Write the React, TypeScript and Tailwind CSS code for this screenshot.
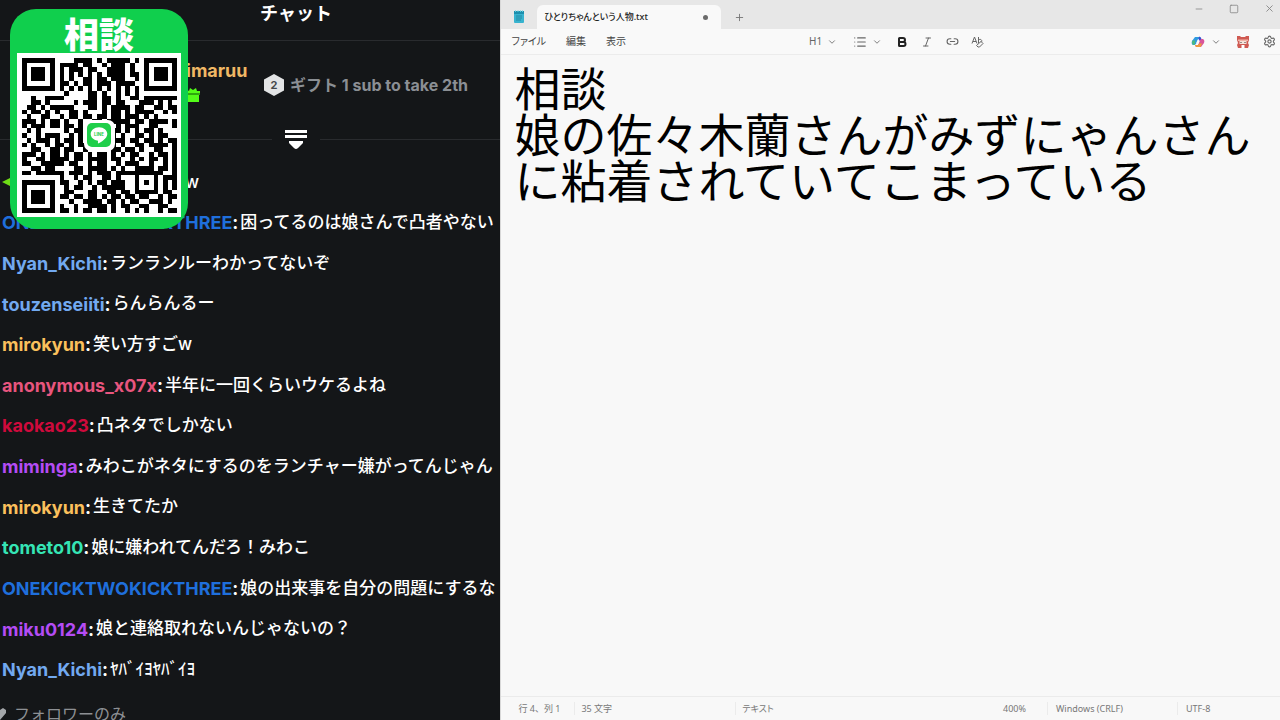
import { Bold, ChevronDown, Italic, Link2, List, Minus, Plus, Settings, Square, X } from 'lucide-react';

interface ChatMessage {
  user: string;
  color: string;
  text: string;
}

const messages: ChatMessage[] = [
  { user: 'ONEKICKTWOKICKTHREE', color: 'text-[#1f6fdc]', text: '困ってるのは娘さんで凸者やない' },
  { user: 'Nyan_Kichi', color: 'text-[#72a9f0]', text: 'ランランルーわかってないぞ' },
  { user: 'touzenseiiti', color: 'text-[#72a9f0]', text: 'らんらんるー' },
  { user: 'mirokyun', color: 'text-[#fbc05c]', text: '笑い方すごw' },
  { user: 'anonymous_x07x', color: 'text-[#e8557e]', text: '半年に一回くらいウケるよね' },
  { user: 'kaokao23', color: 'text-[#cf0a3c]', text: '凸ネタでしかない' },
  { user: 'miminga', color: 'text-[#b44cf5]', text: 'みわこがネタにするのをランチャー嫌がってんじゃん' },
  { user: 'mirokyun', color: 'text-[#fbc05c]', text: '生きてたか' },
  { user: 'tometo10', color: 'text-[#35e5b5]', text: '娘に嫌われてんだろ！みわこ' },
  { user: 'ONEKICKTWOKICKTHREE', color: 'text-[#1f6fdc]', text: '娘の出来事を自分の問題にするな' },
  { user: 'miku0124', color: 'text-[#b44cf5]', text: '娘と連絡取れないんじゃないの？' },
  { user: 'Nyan_Kichi', color: 'text-[#72a9f0]', text: 'ﾔﾊﾞｲﾖﾔﾊﾞｲﾖ' },
];

// One string per row of modules, # is a dark module
const qrRows = [
  '#######....####.#.#####.#.#######',
  '#.....#.####.##..#.###.#..#.....#',
  '#.###.#.#.###.##..####.#..#.###.#',
  '#.###.#.#.#.#.#.#.####.##.#.###.#',
  '#.###.#.#.#..##.##.###..#.#.###.#',
  '#.....#.##.#.##.###.####..#.....#',
  '#######.#.#.#.#.#.#.#.#.#.#######',
  '.........#....##.#..#.#.#........',
  '..#..####.....##.##.#..##.#######',
  '..##.#.....#.###.##.##...###.#.#.',
  '.##.#.#####...##.#.####.##..##.##',
  '#.##.#.#..##.#...#.##.#.####..#.#',
  '.#..##..#.##.##.##.##.###.#.#....',
  '###.#.##.#..#..##.#####.##.####.#',
  '#.###.##.##.#.......#.###..##...#',
  '.#.#.....#.##......##.#.#.##.#...',
  '#..#.###..#.#......#.#..##.#.##..',
  '.#.###.#.##.#......###.##.##.#.##',
  '#.#..#.##.#.##.....#.#..##.####.#',
  '..##..##.##..#.....##.##.#..##..#',
  '###.#.##.#.##.#.##.#.#.##..#.##.#',
  '#..##.####.##.####.##..#.#.##.#.#',
  '##..#####.##..#.##..#.###..#..#.#',
  '..##.##....##.####.#.#..####.##.#',
  '##.######.###.#.###.##########..#',
  '........#..#.##..##.#...#...#.###',
  '#######.##..#.#.##.###..#.#.#.#.#',
  '#.....#..#.##..#.#####..#...#.#.#',
  '#.###.#..##...##..##.##.#####.##.',
  '#.###.#.##.##.##.#.##.##.##..#.##',
  '#.###.#...#..####.##.#.##..###.#.',
  '#.....#.#..#..####.#.##..##..##..',
  '#######.##.#.##.##.#..#.#.#..#.##',
];

const ruleColor = 'bg-[#292b2e]';

function QrCode() {
  return (
    <svg viewBox="0 0 33 33" className="size-[155px]" shapeRendering="crispEdges" role="img" aria-label="QR">
      {qrRows.flatMap((row, y) =>
        row.split('').map((cell, x) =>
          cell === '#' ? <rect key={`${x}-${y}`} x={x} y={y} width="1" height="1" fill="#000" /> : null
        )
      )}
    </svg>
  );
}

/* Green banner that floats over the chat */
function ConsultCard() {
  return (
    <div className="absolute left-[10px] top-[9px] flex h-[220px] w-[178px] flex-col items-center rounded-[26px] bg-[#10cf4d]">
      <h2 className="h-11 font-['Noto_Sans_CJK_JP',sans-serif] text-[35px] font-black leading-[48px] text-white">相談</h2>
      <div className="relative flex size-[164px] items-center justify-center bg-white">
        <QrCode />
        <div className="absolute flex size-[31px] items-center justify-center rounded-[7px] bg-white">
          <svg viewBox="0 0 24 24" className="size-6">
            <rect width="24" height="24" rx="5" fill="#1fcf4a" />
            <path d="M12 4.200c-4.700 0-8.300 3-8.300 6.800 0 3.300 2.800 6 6.600 6.600.9.2.8.6.6 2.400 0 .4.2.6.7.3 2.600-1.300 8.700-4.900 8.700-9.300 0-3.800-3.600-6.800-8.300-6.800z" fill="#fff" />
            <text x="12" y="12.800" fontSize="4.500" fontWeight="700" textAnchor="middle" fill="#1fcf4a">LINE</text>
          </svg>
        </div>
      </div>
    </div>
  );
}

function Chat() {
  return (
    <section className="relative flex w-[39.1%] shrink-0 flex-col overflow-hidden bg-[#141618] font-[Inter,'Noto_Sans_CJK_JP',sans-serif] text-[18px] text-white">
      <div className="flex min-h-0 w-[592px] flex-1 flex-col whitespace-nowrap">
        <h1 className="h-10 text-center text-[18px] font-bold leading-[27px]">チャット</h1>
        <div className={`h-px ${ruleColor}`} />

        {/* Gift leaderboard */}
        <div className="flex h-[87px] items-center pl-[186px]">
          <div className="w-[78px] pb-2">
            <div className="font-bold leading-6 text-[#f0b865]">imaruu</div>
            <svg viewBox="0 0 14 16" className="mt-1 h-4 w-[14px]">
              <path d="M0 2l3 2 1-3 3 2 3-2 1 3h3v3H0z" fill="#53fc18" />
              <path d="M0 6h14v2H0z" fill="#2fa80e" />
              <path d="M0 8h13v7H0z" fill="#53fc18" />
            </svg>
          </div>
          <svg viewBox="0 0 20 22" className="h-[22px] w-5">
            <path d="M10 0l10 5.500v11L10 22 0 16.500v-11z" fill="#e3e4e5" />
            <text x="10" y="15" fontSize="11" fontWeight="700" textAnchor="middle" fill="#45484b">2</text>
          </svg>
          <span className="ml-[6px] text-[16px] font-bold text-[#8b8f94]">ギフト 1 sub to take 2th</span>
        </div>

        <div className="flex h-[22px] items-center justify-center">
          <div className={`h-px flex-1 ${ruleColor}`} />
          <button aria-label="collapse" className="px-[13px]">
            <svg viewBox="0 0 22 20" className="h-5 w-[22px]" fill="#fff">
              <path d="M0 1h22v3H0zM0 6h22v3H0zM4 12h14v2l-5 5q-2 2-4 0l-5-5z" />
            </svg>
          </button>
          <div className={`h-px flex-1 ${ruleColor}`} />
        </div>

        <ul className="mt-3 flex min-h-0 flex-1 flex-col">
          <li className="flex flex-1 items-center">
            <svg viewBox="0 0 12 12" className="ml-[2px] size-3">
              <path d="M0 6l6-3 6-3v12L6 9z" fill="#6fdc16" />
            </svg>
            <span className="pl-[171px] text-[17px] font-medium">w</span>
          </li>
          {messages.map((m, i) => (
            <li key={i} className="flex flex-1 items-center pl-[2px]">
              <span className={`font-bold ${m.color}`}>{m.user}</span>
              <span className="font-bold">:</span>
              <span className="ml-0.5 text-[17px] font-medium">{m.text}</span>
            </li>
          ))}
        </ul>

        <div className="flex h-[30px] shrink-0 items-start gap-2 text-[16px] text-[#8d9094]">
          <svg viewBox="0 0 12 12" className="-ml-[6px] mt-[18px] size-3" fill="#a4a7aa">
            <path d="M6 12L0 5V2l3-2 3 2 3-2 3 2v3z" />
          </svg>
          <span className="mt-3 leading-6">フォロワーのみ</span>
        </div>
      </div>
      <ConsultCard />
    </section>
  );
}

function TitleBar() {
  return (
    <div className="flex h-[29px] items-end bg-[#e7e7e7]">
      <div className="flex h-[25px] w-9 items-center justify-center">
        <svg viewBox="0 0 12 14" className="h-[14px] w-3">
          <rect x="1" y="1" width="10" height="12" rx="1" fill="#37b3cf" />
          <path d="M1 1h10v3H1z" fill="#1c8fae" />
          <path d="M3 6h6M3 8h6M3 10h5" stroke="#1e7d98" strokeWidth="0.8" />
          <path d="M2.500 0v2M5 0v2M7.500 0v2M9.500 0v2" stroke="#7adbe8" strokeWidth="0.8" />
        </svg>
      </div>
      <div className="flex h-6 w-[184px] items-center justify-between rounded-t-md bg-[#f9f9f9] pl-[7px] pr-[13px] text-[9px] font-medium text-[#222]">
        <span className="[font-feature-settings:'palt']">ひとりちゃんという人物.txt</span>
        <span className="size-[5px] rounded-full bg-[#6b6b6b]" />
      </div>
      <button aria-label="new tab" className="flex h-6 w-9 items-center justify-center text-[#777]">
        <Plus size={11} strokeWidth={2} />
      </button>
      <div className="ml-auto flex items-center gap-[25px] self-start pr-[5px] pt-[3px] text-[#888]">
        <button aria-label="minimize"><Minus size={10} /></button>
        <button aria-label="maximize"><Square size={10} /></button>
        <button aria-label="close"><X size={11} /></button>
      </div>
    </div>
  );
}

function MenuBar() {
  return (
    <div className="flex h-[26px] items-center border-b border-[#ececec] bg-[#f9f9f9] text-[10px] text-[#444]">
      <div className="flex w-[39.5%] gap-5 pl-[10px] [font-feature-settings:'palt']">
        <button>ファイル</button>
        <button>編集</button>
        <button>表示</button>
      </div>
      <div className="flex flex-1 items-center text-[#666]">
        <button className="flex items-center gap-[5px]">H1 <ChevronDown size={10} /></button>
        <button aria-label="list" className="ml-4 flex items-center gap-[5px]">
          <List size={14} strokeWidth={2} /><ChevronDown size={10} />
        </button>
        <button aria-label="bold" className="ml-[14px] text-[#222]"><Bold size={12} strokeWidth={4} /></button>
        <button aria-label="italic" className="ml-[13px]"><Italic size={12} strokeWidth={2} /></button>
        <button aria-label="link" className="ml-[13px]"><Link2 size={13} strokeWidth={2} /></button>
        <button aria-label="clear formatting" className="ml-3">
          <svg viewBox="0 0 13 13" className="size-[13px]" fill="none" stroke="currentColor">
            <path d="M1 8.500L3.500 2 6 8.500M2 6.500h3M7.500 2v6M7.500 5c2-1.500 4 0 3 2M5.500 10.500l4.500-4 2 2-3.500 3.500H7z" />
          </svg>
        </button>
      </div>
      <div className="flex items-center pr-1">
        <button aria-label="copilot" className="flex items-center gap-[6px] text-[#666]">
          <svg viewBox="0 0 14 14" className="size-[14px]">
            <path d="M4 2h5l1 2H7L5 9 3.500 10H2Q0 9 1 6z" fill="#2f9be0" />
            <path d="M1.300 5.500h3L3.500 10H2Q.5 9 1.300 5.500z" fill="#4dbb7c" />
            <path d="M8 1.500q2 0 2.500 2.500H12q-1.500 0-2 1L9 7 7.500 4z" fill="#3a4fcf" />
            <path d="M10 12H5L4 10h3l2-5 1.500-1H12q2 1 1 4z" fill="#d9559a" />
            <path d="M9.500 12H5.500q-1.500-.5-1.500-2h3L8 8.500h3z" fill="#f09a3e" />
            <path d="M6.200 5.500h2.500L7.800 8.500H5.300z" fill="#f9f9f9" />
          </svg>
          <ChevronDown size={10} />
        </button>
        <button aria-label="account" className="ml-4">
          <svg viewBox="0 0 12 12" className="size-3">
            <path d="M0 0h3l1 1h4l1-1h3v4l-1 3 1 2-1 3H1L0 9l1-2-1-3z" fill="#cf5a52" />
            <path d="M1 3.500h10V5H1z" fill="#f0b4a8" />
            <path d="M2.500 5h7v3h-7z" fill="#f5e3da" />
            <path d="M3.500 6h1v1h-1zM7.500 6h1v1h-1z" fill="#433" />
            <path d="M4.500 9h3v3h-3z" fill="#fff" />
          </svg>
        </button>
        <button aria-label="settings" className="ml-[14px] text-[#666]"><Settings size={13} strokeWidth={2} /></button>
      </div>
    </div>
  );
}

function StatusBar() {
  return (
    <div className="flex h-6 items-center border-t border-[#ebebeb] text-[9px] text-[#777]">
      <span className="w-[73px] pl-[17px]">行 4、列 1</span>
      <span className="w-[161px] border-l border-[#ebebeb] pl-[6px]">35 文字</span>
      <span className="flex-1 border-l border-[#ebebeb] pl-[6px] [font-feature-settings:'palt']">テキスト</span>
      <span className="w-11">400%</span>
      <span className="w-[130px] border-l border-[#ebebeb] pl-2">Windows (CRLF)</span>
      <span className="w-[103px] border-l border-[#ebebeb] pl-2">UTF-8</span>
    </div>
  );
}

export default function App() {
  return (
    <div className="flex h-screen overflow-hidden bg-[#141618]">
      <Chat />
      <main className="flex min-w-0 flex-1 flex-col border-l border-[#d8d8d8] bg-[#f8f8f8] font-['Noto_Sans','Noto_Sans_CJK_JP',sans-serif]">
        <TitleBar />
        <MenuBar />
        <textarea
          aria-label="document"
          className="w-full flex-1 resize-none pl-[13px] pr-4 pt-2 font-['Noto_Sans_CJK_JP',sans-serif] text-[46px] leading-[46px] text-black outline-none"
          defaultValue={'相談\n娘の佐々木蘭さんがみずにゃんさんに粘着されていてこまっている'}
        />
        <StatusBar />
      </main>
    </div>
  );
}
